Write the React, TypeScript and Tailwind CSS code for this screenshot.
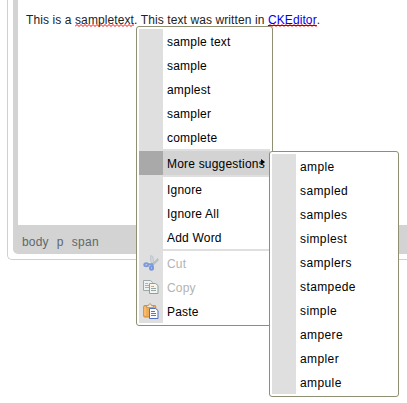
import React from 'react';

type Item = { label: string; icon?: React.ReactNode; disabled?: boolean };

const CutIcon = () => (
  <svg width="16" height="16" viewBox="0 0 16 16" fill="none">
    <path d="M7.500.5 10 1.500l.8 7-1.300 1.500-2-5z" fill="#cdd5d9" stroke="#b3bec4" strokeWidth=".6" />
    <path d="M15 3.500v2L10.500 10 9 9z" fill="#b8c4ca" stroke="#a5b3ba" strokeWidth=".6" />
    <path d="M9.800 9 5 9.500M9.800 9.500 9.300 12" stroke="#7d9bdc" strokeWidth="2" />
    <ellipse cx="3.300" cy="9.700" rx="2" ry="1.500" stroke="#7d9bdc" strokeWidth="2" />
    <ellipse cx="8.500" cy="13" rx="1.500" ry="1.800" stroke="#7595dc" strokeWidth="2" />
  </svg>
);

const CopyIcon = () => (
  <svg width="16" height="16" viewBox="0 0 16 16" fill="none">
    <path d="M.5 1.500h7l2 2v8h-9z" fill="#eef1f0" stroke="#9aaaa8" />
    <path d="M2 4.500h3M2 6.500h4M2 8.500h4" stroke="#a5b0b8" />
    <path d="M2 4.500h2" stroke="#d5b184" />
    <path d="M6.500 4.500h6l2.500 2v8H6.500z" fill="#f4f5f3" stroke="#8ca09c" />
    <path d="M8 7.500h3M8 9.500h5M8 11.500h5" stroke="#94a6a4" />
    <path d="M8 7.500h2" stroke="#d5ae79" />
  </svg>
);

const PasteIcon = () => (
  <svg width="16" height="16" viewBox="0 0 16 16" fill="none">
    <rect x=".7" y="2.500" width="12" height="11.500" rx="1" fill="#efab55" stroke="#d18b35" />
    <path d="M2 4v8.500" stroke="#ffd18d" />
    <path d="M3.500 4.500V3l2-.5.5-1.500h2l.5 1.500 2 .5v1.500z" fill="#f1e9da" stroke="#b99362" strokeWidth=".8" />
    <path d="M6.500 5.500h6l2.500 2v8H6.500z" fill="#fafcff" stroke="#526fc1" />
    <path d="M8 8.500h4M8 10.500h5M8 12.500h5" stroke="#5876bd" />
  </svg>
);

const suggestions: Item[] = [
  { label: 'sample text' }, { label: 'sample' }, { label: 'amplest' }, { label: 'sampler' }, { label: 'complete' },
];
const actions: Item[] = [{ label: 'Ignore' }, { label: 'Ignore All' }, { label: 'Add Word' }];
const clipboard: Item[] = [
  { label: 'Cut', icon: <CutIcon />, disabled: true },
  { label: 'Copy', icon: <CopyIcon />, disabled: true },
  { label: 'Paste', icon: <PasteIcon /> },
];
const more = ['ample', 'sampled', 'samples', 'simplest', 'samplers', 'stampede', 'simple', 'ampere', 'ampler', 'ampule'];

function MenuRow({ item }: { item: Item }) {
  return (
    <div className="flex h-6 items-center">
      <span className="flex h-full w-6 shrink-0 items-center justify-center bg-[#dfdfdf]">{item.icon}</span>
      <span className={`pl-1 pt-0.5 ${item.disabled ? 'text-[#b3b3b3]' : 'text-black'}`}>{item.label}</span>
    </div>
  );
}

const wave = Array.from({ length: 18 }, (_, i) => `${i * 4},2.500 ${i * 4 + 2},.5`).join(' ');

function Squiggle() {
  return (
    <svg className="absolute left-0 top-3 h-[3px] w-full overflow-hidden">
      <polyline points={wave} fill="none" stroke="#ff0000" strokeWidth="1" />
    </svg>
  );
}

export default function App() {
  return (
    <div className="relative h-[403px] w-[407px] overflow-hidden bg-white font-['Liberation_Sans',Arial,sans-serif] text-[12px] leading-4">
      <div className="ml-[7px] h-[260px] rounded-bl-[5px] border-b border-l border-[#d0d0d0] pb-[5px] pl-[5px]">
        <div className="flex h-full flex-col rounded-bl-[5px] bg-[#d3d3d3] pl-[5px]">
          <div className="h-[225px] bg-white pl-2 pt-3 tracking-[0.1px] text-[#222]">
            <p className="whitespace-nowrap">
              This is a <span className="relative inline-block">sampletext<Squiggle /></span>. This text was written in{' '}
              <span className="relative inline-block"><a className="text-[#0000ee] underline [text-decoration-skip-ink:none]">CKEditor</a><Squiggle /></span>.
            </p>
          </div>
          <div className="flex gap-2 pl-1 pt-[9px] tracking-[0.2px] text-[#60676a]">
            <span>body</span><span>p</span><span className="tracking-[0.3px]">span</span>
          </div>
        </div>
      </div>
      <div className="absolute left-[136px] top-[26px] w-[137px] rounded-[3px] border border-[#8f8f73] bg-white p-[2px] tracking-[0.2px]">
        {suggestions.map((item) => <MenuRow key={item.label} item={item} />)}
        <div className="flex h-7 items-center border-y-2 border-[#dfdfdf] bg-[#d3d3d3]">
          <span className="h-full w-6 shrink-0 bg-[#a9a9a9]" />
          <span className="whitespace-nowrap pl-1 pt-0.5 text-black">More suggestions</span>
          <svg className="-ml-1 mb-0.5 shrink-0" width="4" height="6" viewBox="0 0 4 6"><path d="M0 0v6l4-3z" fill="#000" /></svg>
        </div>
        {actions.map((item) => <MenuRow key={item.label} item={item} />)}
        <div className="h-0.5 bg-[#dfdfdf]" />
        {clipboard.map((item) => <MenuRow key={item.label} item={item} />)}
      </div>
      <div className="absolute left-[269px] top-[151px] w-[130px] rounded-[3px] border border-[#8f8f73] bg-white p-[2px] tracking-[0.4px]">
        {more.map((label) => <MenuRow key={label} item={{ label }} />)}
      </div>
    </div>
  );
}
